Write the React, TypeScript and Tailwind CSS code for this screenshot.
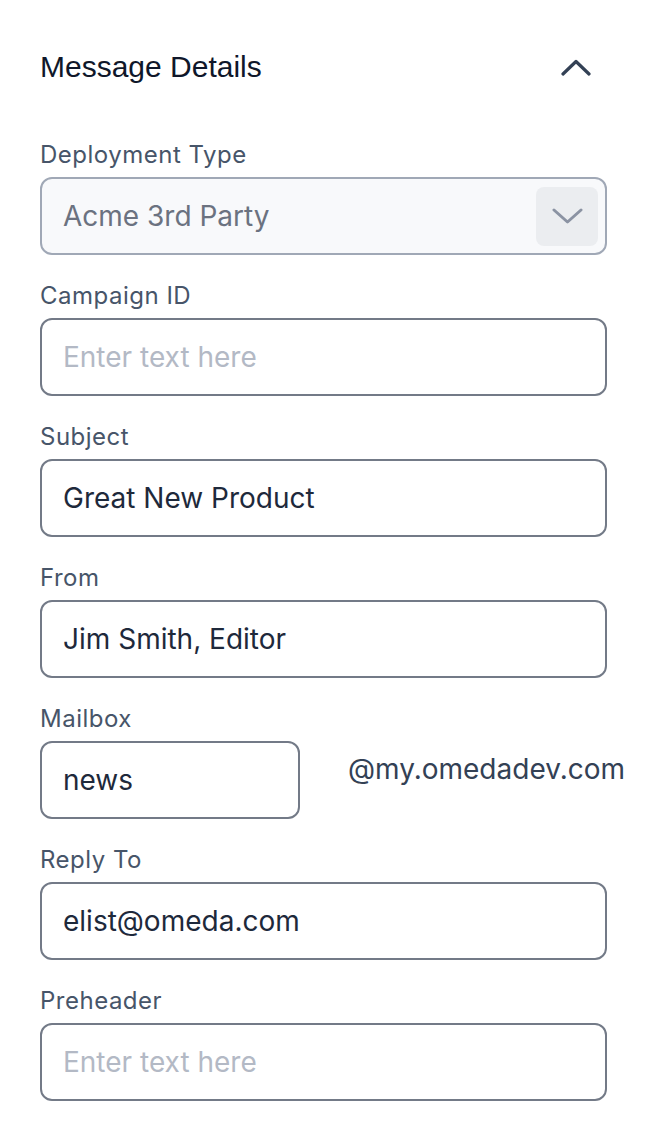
import React, { useState } from 'react';

const ChevronUp = () => (
  <svg width="30" height="17" viewBox="0 0 30 17" fill="none">
    <path d="M2 15L15 2.5L28 15" stroke="#334155" strokeWidth="3.2" strokeLinecap="round" strokeLinejoin="round" />
  </svg>
);

const ChevronDown = () => (
  <svg width="31" height="16" viewBox="0 0 31 16" fill="none">
    <path d="M2 2L15.5 14L29 2" stroke="#8b93a3" strokeWidth="3" strokeLinecap="round" strokeLinejoin="round" />
  </svg>
);

interface FieldProps {
  label: string;
  children: React.ReactNode;
}

const Field: React.FC<FieldProps> = ({ label, children }) => (
  <div className="flex flex-col gap-[7px]">
    <label className="text-[24px] leading-[30px] tracking-[0.5px] text-[#475569]">{label}</label>
    {children}
  </div>
);

const inputClass =
  'h-[78px] w-full rounded-[12px] border-2 border-[#737a87] bg-white px-[21px] text-[28px] text-[#1e293b] outline-none placeholder:text-[#b3b9c5]';

export default function App() {
  const [campaignId, setCampaignId] = useState('');
  const [subject, setSubject] = useState('Great New Product');
  const [from, setFrom] = useState('Jim Smith, Editor');
  const [mailbox, setMailbox] = useState('news');
  const [replyTo, setReplyTo] = useState('elist@omeda.com');
  const [preheader, setPreheader] = useState('');

  return (
    <div className="min-h-[1130px] w-[656px] bg-white px-[40px] pt-[40px]" style={{ fontFamily: 'Inter, "Noto Sans", sans-serif' }}>
      {/* Header */}
      <div className="flex h-[54px] w-[567px] items-center justify-between pr-[16px]">
        <h2 className="text-[30px] leading-none text-[#0f172a]" style={{ fontFamily: '"Liberation Sans", Arial, sans-serif' }}>
          Message Details
        </h2>
        <ChevronUp />
      </div>

      {/* Fields */}
      <div className="mt-[46px] flex w-[567px] flex-col gap-[26px]">
        <Field label="Deployment Type">
          <div className="flex h-[78px] items-center justify-between rounded-[12px] border-2 border-[#a0a8b6] bg-[#f8f9fb] pl-[21px] pr-[7px]">
            <span className="text-[28px] text-[#6b7280]">Acme 3rd Party</span>
            <div className="flex h-[59px] w-[62px] items-center justify-center rounded-[8px] bg-[#ebedf0]">
              <ChevronDown />
            </div>
          </div>
        </Field>

        <Field label="Campaign ID">
          <input className={inputClass} placeholder="Enter text here" value={campaignId} onChange={(e) => setCampaignId(e.target.value)} />
        </Field>

        <Field label="Subject">
          <input className={inputClass} value={subject} onChange={(e) => setSubject(e.target.value)} />
        </Field>

        <Field label="From">
          <input className={inputClass} value={from} onChange={(e) => setFrom(e.target.value)} />
        </Field>

        <Field label="Mailbox">
          <div className="flex items-start gap-[48px]">
            <input
              className="h-[78px] w-[260px] shrink-0 rounded-[12px] border-2 border-[#737a87] bg-white px-[21px] text-[28px] text-[#1e293b] outline-none"
              value={mailbox}
              onChange={(e) => setMailbox(e.target.value)}
            />
            <span className="shrink-0 whitespace-nowrap pt-[8px] text-[28px] leading-[40px] text-[#334155]">@my.omedadev.com</span>
          </div>
        </Field>

        <Field label="Reply To">
          <input className={inputClass} value={replyTo} onChange={(e) => setReplyTo(e.target.value)} />
        </Field>

        <Field label="Preheader">
          <input className={inputClass} placeholder="Enter text here" value={preheader} onChange={(e) => setPreheader(e.target.value)} />
        </Field>
      </div>
    </div>
  );
}
